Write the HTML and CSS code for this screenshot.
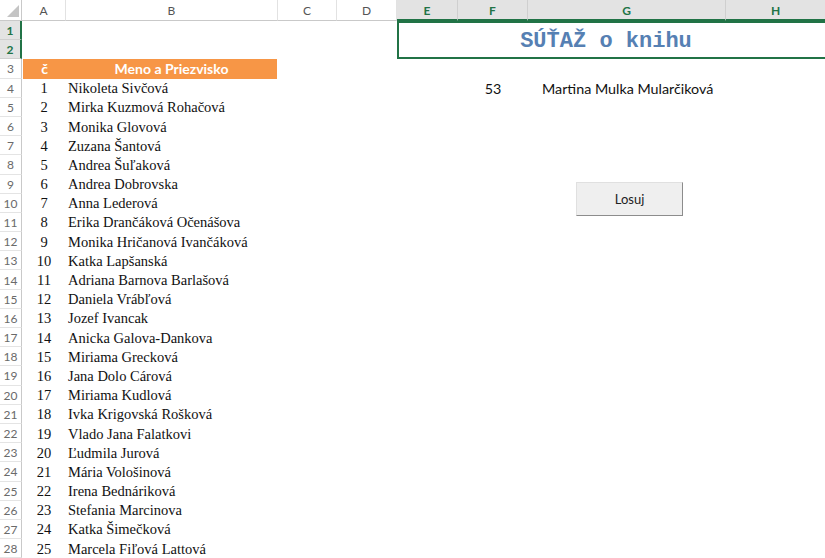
FILE: index.html
```html
<!DOCTYPE html>
<html lang="sk">
<head>
<meta charset="utf-8">
<title>SÚŤAŽ o knihu</title>
<link rel="stylesheet" href="styles.css">
</head>
<body>
<div class="sheet">
  <div class="ch corner"><svg width="12" height="12" viewBox="0 0 12 12"><polygon points="12,0 12,12 0,12" fill="#c4c4c4"/></svg></div>
  <div class="ch">A</div>
  <div class="ch">B</div>
  <div class="ch">C</div>
  <div class="ch">D</div>
  <div class="ch sel">E</div>
  <div class="ch sel">F</div>
  <div class="ch sel">G</div>
  <div class="ch sel last">H</div>

  <div class="rh on">1</div>
  <div class="title">SÚŤAŽ o knihu</div>
  <div class="rh on">2</div>

  <div class="rh">3</div><div class="ca head">č</div><div class="cb head">Meno a Priezvisko</div>

  <div class="rh">4</div><div class="ca">1</div><div class="cb">Nikoleta Sivčová</div>
  <div class="cf">53</div><div class="cg">Martina Mulka Mularčiková</div>
  <div class="rh">5</div><div class="ca">2</div><div class="cb">Mirka Kuzmová Rohačová</div>
  <div class="rh">6</div><div class="ca">3</div><div class="cb">Monika Glovová</div>
  <div class="rh">7</div><div class="ca">4</div><div class="cb">Zuzana Šantová</div>
  <div class="rh">8</div><div class="ca">5</div><div class="cb">Andrea Šuľaková</div>
  <div class="rh">9</div><div class="ca">6</div><div class="cb">Andrea Dobrovska</div>
  <div class="rh">10</div><div class="ca">7</div><div class="cb">Anna Lederová</div>
  <div class="rh">11</div><div class="ca">8</div><div class="cb">Erika Drančáková Očenášova</div>
  <div class="rh">12</div><div class="ca">9</div><div class="cb">Monika Hričanová Ivančáková</div>
  <div class="rh">13</div><div class="ca">10</div><div class="cb">Katka Lapšanská</div>
  <div class="rh">14</div><div class="ca">11</div><div class="cb">Adriana Barnova Barlašová</div>
  <div class="rh">15</div><div class="ca">12</div><div class="cb">Daniela Vrábľová</div>
  <div class="rh">16</div><div class="ca">13</div><div class="cb">Jozef Ivancak</div>
  <div class="rh">17</div><div class="ca">14</div><div class="cb">Anicka Galova-Dankova</div>
  <div class="rh">18</div><div class="ca">15</div><div class="cb">Miriama Grecková</div>
  <div class="rh">19</div><div class="ca">16</div><div class="cb">Jana Dolo Cárová</div>
  <div class="rh">20</div><div class="ca">17</div><div class="cb">Miriama Kudlová</div>
  <div class="rh">21</div><div class="ca">18</div><div class="cb">Ivka Krigovská Rošková</div>
  <div class="rh">22</div><div class="ca">19</div><div class="cb">Vlado Jana Falatkovi</div>
  <div class="rh">23</div><div class="ca">20</div><div class="cb">Ľudmila Jurová</div>
  <div class="rh">24</div><div class="ca">21</div><div class="cb">Mária Vološinová</div>
  <div class="rh">25</div><div class="ca">22</div><div class="cb">Irena Bednáriková</div>
  <div class="rh">26</div><div class="ca">23</div><div class="cb">Stefania Marcinova</div>
  <div class="rh">27</div><div class="ca">24</div><div class="cb">Katka Šimečková</div>
  <div class="rh">28</div><div class="ca">25</div><div class="cb">Marcela Fiľová Lattová</div>
</div>
<button class="btn" type="button">Losuj</button>
</body>
</html>
```
FILE: styles.css
```css
html, body {
  margin: 0;
  padding: 0;
  background: #ffffff;
}
body {
  position: relative;
  width: 825px;
  height: 558px;
  overflow: hidden;
  font-family: Lato, "Open Sans", sans-serif;
}
.sheet {
  display: grid;
  grid-template-columns: 22px 44px 212px 59px 60px 61px 70px 198px 99px;
  grid-template-rows: 21px repeat(28, 19.2px);
  width: 825px;
}
.ch {
  box-sizing: border-box;
  display: flex;
  align-items: center;
  justify-content: center;
  font-size: 12px;
  color: #555555;
  background: #ffffff;
  border-right: 1px solid #e2e2e2;
  border-bottom: 1px solid #c9c9c9;
  padding-top: 1px;
}
.ch.corner {
  align-items: flex-end;
  justify-content: flex-end;
  padding: 0 2px 3px 0;
  border-right: 1px solid #c9c9c9;
}
.ch.sel {
  background: #e3e3e3;
  color: #217346;
  font-weight: bold;
  border-right: 1px solid #cfcfcf;
  border-bottom: 2px solid #217346;
}
.ch.last {
  border-right: none;
}
.rh {
  grid-column: 1;
  box-sizing: border-box;
  display: flex;
  align-items: center;
  justify-content: center;
  font-size: 12px;
  color: #6a6a6a;
  border-right: 1px solid #c9c9c9;
  border-bottom: 1px solid #e4e4e4;
  padding-top: 1px;
}
.rh.on {
  background: #e3e3e3;
  color: #217346;
  font-weight: bold;
  border-right: 2px solid #217346;
  border-bottom: 1px solid #cfcfcf;
}
.title {
  grid-column: 6 / 10;
  grid-row: span 2;
  box-sizing: border-box;
  border: 2px solid #217346;
  border-right: none;
  display: flex;
  align-items: center;
  justify-content: center;
  padding: 3px 12px 0 0;
  font-family: "Liberation Mono", "DejaVu Sans Mono", monospace;
  font-weight: bold;
  font-size: 22px;
  color: #5680b3;
}
.ca, .cb {
  display: flex;
  align-items: center;
  padding-top: 1px;
  font-family: "Liberation Serif", "Times New Roman", serif;
  font-size: 14.5px;
  color: #111111;
}
.ca {
  grid-column: 2;
  justify-content: center;
}
.cb {
  grid-column: 3;
  padding-left: 2px;
  white-space: nowrap;
}
.ca.head, .cb.head {
  background: #f79646;
  color: #ffffff;
  font-family: Lato, "Open Sans", sans-serif;
  font-weight: bold;
  font-size: 14px;
  justify-content: center;
  padding-top: 0;
}
.ca.head {
  margin-left: 1px;
}
.cb.head {
  padding-left: 0;
  margin-right: 1px;
}
.cf, .cg {
  display: flex;
  align-items: center;
  padding-top: 1px;
  font-family: Lato, "Open Sans", sans-serif;
  font-size: 14.3px;
  color: #111111;
  white-space: nowrap;
}
.cf {
  grid-column: 7;
  justify-content: center;
}
.cg {
  grid-column: 8;
  padding-left: 14px;
}
.btn {
  position: absolute;
  left: 576px;
  top: 182px;
  width: 107px;
  height: 34px;
  box-sizing: border-box;
  background: #efefef;
  border: 1px solid #e0e0e0;
  border-right: 1px solid #8c8c8c;
  border-bottom: 1px solid #8c8c8c;
  border-radius: 0;
  font-family: Lato, "Open Sans", sans-serif;
  font-size: 13px;
  color: #222222;
  padding: 0;
}
```
